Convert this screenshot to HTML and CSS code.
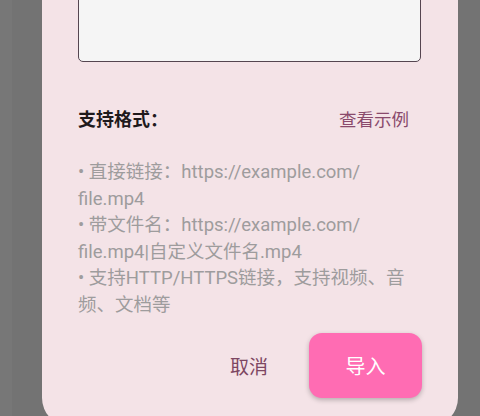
FILE: index.html
```html
<!DOCTYPE html>
<html lang="zh">
<head>
<meta charset="utf-8">
<link rel="stylesheet" href="styles.css">
</head>
<body>
<div class="screen">
  <div class="stripe"></div>
  <div class="dialog">
    <div class="textarea"></div>
    <div class="format-row">
      <span class="format-title">支持格式：</span>
      <span class="example-link">查看示例</span>
    </div>
    <div class="format-list">
      <p>• 直接链接：https://example.com/<br>file.mp4</p>
      <p>• 带文件名：https://example.com/<br>file.mp4|自定义文件名.mp4</p>
      <p>• 支持HTTP/HTTPS链接，支持视频、音<br>频、文档等</p>
    </div>
    <div class="actions">
      <span class="btn-cancel">取消</span>
      <span class="btn-import">导入</span>
    </div>
  </div>
</div>
</body>
</html>
```
FILE: styles.css
```css
html, body {
  margin: 0;
  padding: 0;
  background: #737373;
  overflow: hidden;
}
.screen {
  display: flex;
  height: 416px;
  overflow: hidden;
  font-family: Roboto, "Noto Sans CJK SC", sans-serif;
}
.stripe {
  width: 12px;
  flex: none;
  background: #777777;
}
.dialog {
  margin-left: 30px;
  width: 416px;
  flex: none;
  box-sizing: border-box;
  padding: 0 37px 28px 36px;
  margin-top: -60px;
  align-self: flex-start;
  background: #f4e3e7;
  border-radius: 28px;
}
.textarea {
  height: 122px;
  box-sizing: border-box;
  border: 1.5px solid #554550;
  border-radius: 5px;
  background: #f5f5f5;
}
.format-row {
  display: flex;
  justify-content: space-between;
  align-items: center;
  margin-top: 43px;
  height: 26px;
  padding-right: 12px;
}
.format-title {
  font-size: 18px;
  font-weight: 700;
  color: #1f1a1c;
}
.example-link {
  font-size: 17.5px;
  color: #8a4a6c;
}
.format-list {
  margin-top: 28px;
  color: #9e9c9d;
  font-size: 18.5px;
  line-height: 26.5px;
}
.format-list p {
  margin: 0;
}
.actions {
  display: flex;
  justify-content: flex-end;
  align-items: center;
  gap: 41px;
  margin-top: 15px;
  margin-right: -1px;
}
.btn-cancel {
  font-size: 19px;
  color: #7d4762;
}
.btn-import {
  width: 113px;
  height: 65px;
  display: flex;
  align-items: center;
  justify-content: center;
  border-radius: 13px;
  background: #ff6cb3;
  color: #ffffff;
  font-size: 20px;
  box-shadow: 0 2px 5px rgba(0,0,0,0.25);
}
```
